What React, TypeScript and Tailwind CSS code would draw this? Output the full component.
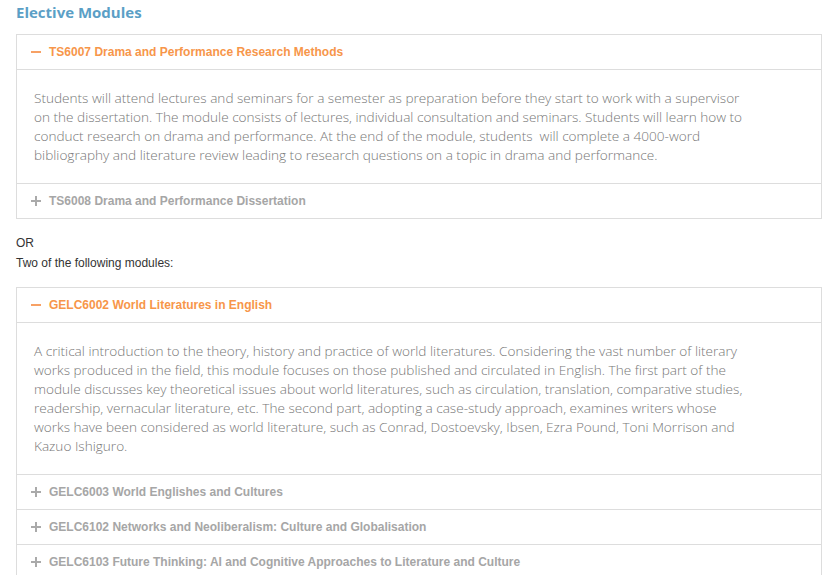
import { ReactNode } from "react"

type Item = {
  code: string
  title: string
  open?: boolean
  body?: string
}

const groupOne: Item[] = [
  {
    code: "TS6007",
    title: "Drama and Performance Research Methods",
    open: true,
    body:
      "Students will attend lectures and seminars for a semester as preparation before they start to work with a supervisor on the dissertation. The module consists of lectures, individual consultation and seminars. Students will learn how to conduct research on drama and performance. At the end of the module, students  will complete a 4000-word bibliography and literature review leading to research questions on a topic in drama and performance.",
  },
  { code: "TS6008", title: "Drama and Performance Dissertation" },
]

const groupTwo: Item[] = [
  {
    code: "GELC6002",
    title: "World Literatures in English",
    open: true,
    body:
      "A critical introduction to the theory, history and practice of world literatures. Considering the vast number of literary works produced in the field, this module focuses on those published and circulated in English. The first part of the module discusses key theoretical issues about world literatures, such as circulation, translation, comparative studies, readership, vernacular literature, etc. The second part, adopting a case-study approach, examines writers whose works have been considered as world literature, such as Conrad, Dostoevsky, Ibsen, Ezra Pound, Toni Morrison and Kazuo Ishiguro.",
  },
  { code: "GELC6003", title: "World Englishes and Cultures" },
  { code: "GELC6102", title: "Networks and Neoliberalism: Culture and Globalisation" },
  { code: "GELC6103", title: "Future Thinking: AI and Cognitive Approaches to Literature and Culture" },
]

const Icon = ({ open }: { open?: boolean }) => (
  <span className="relative mr-[8px] inline-block h-[10px] w-[10px] shrink-0">
    <span
      className={`absolute left-0 top-[4px] h-[2px] w-[10px] ${open ? "bg-[#f7a165]" : "bg-[#aaaaaa]"}`}
    />
    {!open && <span className="absolute left-[4px] top-0 h-[10px] w-[2px] bg-[#aaaaaa]" />}
  </span>
)

const Row = ({ item, first }: { item: Item; first: boolean }) => (
  <div className={first ? "" : "border-t border-[#dddddd]"}>
    <div
      className={`flex h-[34px] items-center pl-[14px] text-[12px] font-bold ${
        item.open ? "text-[#f7964a]" : "text-[#a6a6a6]"
      }`}
    >
      <Icon open={item.open} />
      <span>
        {item.code} {item.title}
      </span>
    </div>
    {item.open && (
      <div className="border-t border-[#dddddd] pb-[19px] pl-[17px] pr-[75px] pt-[18px]">
        <p
          className="whitespace-pre-wrap text-[13.6px] font-light leading-[19px] text-[#777777]"
          style={{ fontFamily: "'Open Sans', sans-serif" }}
        >
          {item.body}
        </p>
      </div>
    )}
  </div>
)

const Accordion = ({ items }: { items: Item[] }) => (
  <div className="border border-[#dddddd] bg-white">
    {items.map((item, i) => (
      <Row key={item.code} item={item} first={i === 0} />
    ))}
  </div>
)

const Note = ({ children }: { children: ReactNode }) => (
  <p className="text-[12px] leading-[20px] text-[#333333]">{children}</p>
)

export default function App() {
  return (
    <div
      className="min-h-screen bg-white pl-[16px]"
      style={{ fontFamily: "'Liberation Sans', Arial, sans-serif" }}
    >
      <h2
        className="pt-[1px] text-[15px] font-bold leading-[22px] text-[#5b9fc6]"
        style={{ fontFamily: "'Open Sans', sans-serif" }}
      >
        Elective Modules
      </h2>
      <div className="mt-[11px]">
        <Accordion items={groupOne} />
      </div>
      <div className="mt-[14px]">
        <Note>OR</Note>
        <Note>Two of the following modules:</Note>
      </div>
      <div className="mt-[14px]">
        <Accordion items={groupTwo} />
      </div>
    </div>
  )
}
